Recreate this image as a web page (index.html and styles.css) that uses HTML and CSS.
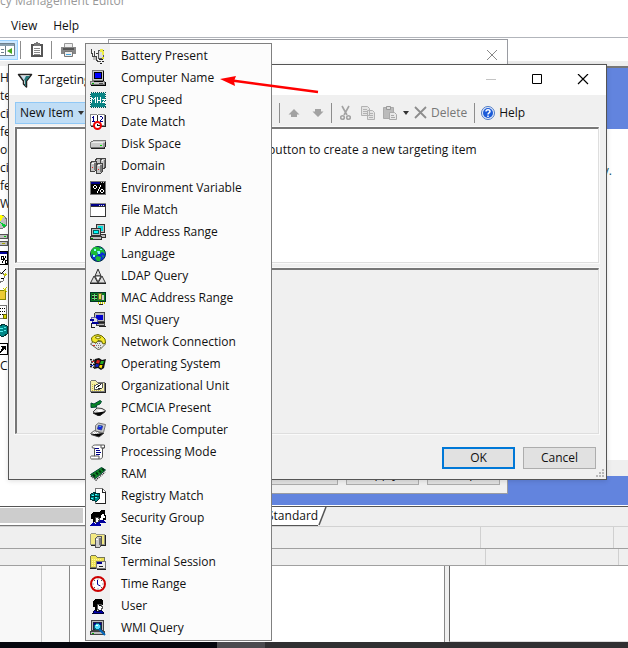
FILE: index.html
```html
<!DOCTYPE html>
<html lang="en">
<head>
<meta charset="utf-8">
<meta name="viewport" content="width=device-width, initial-scale=1">
<title>Targeting</title>
<link rel="stylesheet" href="styles.css">
</head>
<body>
<div class="desktop">
  <header class="titlebar">cy Management Editor</header>
  <nav class="menubar">
    <button type="button">View</button>
    <button type="button">Help</button>
  </nav>
  <div class="toolbar">
    <button type="button" class="tool pressed" aria-label="Show pane"><svg width="17" height="17" viewBox="0 0 17 17"><path fill="#fff" stroke="#6d7f8c" d="M-.5 2.500h15v12h-15z"/><path fill="#8aa0af" d="M0 3h14v2H0z"/><path stroke="#6d7f8c" d="M5.500 5v9M1 8.500h3M1 11.500h3"/><path fill="#45a81e" d="M12 7v6L7 10z"/></svg></button>
    <span class="divider"></span>
    <button type="button" class="tool clip" aria-label="Paste"><svg width="14" height="16" viewBox="0 0 14 16"><path fill="#fff" stroke="#555" stroke-width="2" d="M2 3h10v11H2z"/><path fill="#777" d="M4 1h2V0h2v1h2v3H4z"/><path stroke="#888" d="M4 6.500h6M4 8.500h6M4 10.500h6M4 12.500h6"/></svg></button>
    <span class="divider"></span>
    <button type="button" class="tool print" aria-label="Print"><svg width="17" height="16" viewBox="0 0 17 16"><path fill="#eee" stroke="#999" d="M4.500 1.500h8v5h-8z"/><path fill="#888" d="M1 5h15v7H1z"/><path fill="#555" d="M3 6h11v2H3z"/><path fill="#eee" stroke="#777" d="M4.500 9.500h8v5h-8z"/><path stroke="#45a6df" d="M6 12.500h5"/></svg></button>
  </div>
  <main class="workspace">
    <ul class="tree">
      <li>H</li><li>te</li><li>ci</li><li>fe</li><li>on</li><li>ci</li><li>fe</li><li>W</li>
      <li><svg class="px" viewBox="8 0 8 16"><circle cx="8" cy="8" r="7" fill="#c0c0c0" stroke="#777"/><path fill="#ff0" d="M8 8V1l4 1z"/><path fill="#0c3" d="M8 8l6 3-2 3z"/></svg></li>
      <li><svg class="px" viewBox="8 0 8 16"><path fill="#c0c0c0" stroke="#555" d="M5 2.500h10v4H5zM5 9.500h10v4H5z"/><path stroke="#0c0" d="M12 4.500h2"/><path stroke="#aa0" d="M10 11.500h3"/></svg></li>
      <li><svg class="px" viewBox="8 0 8 16"><path fill="#fff" stroke="#000" d="M5 1.500h10v13H5z"/><path fill="#009" d="M8 2h7v2H8z"/><path stroke="#000" fill="none" d="M9 6h2v3H9zM14 6l-4 7M13 10h2v3h-2z"/></svg></li>
      <li><svg class="px" viewBox="8 0 8 16"><path fill="#fff" stroke="#777" d="M7 4.500l6 2-2 7-5 1z"/><path stroke="#000" d="M9 6l5-5M9 10h3"/><path stroke="#cc0" stroke-width="2" d="M12 8l2-2"/></svg></li>
      <li><svg class="px" viewBox="8 0 8 16"><path fill="#ec3" stroke="#880" d="M5 4.500h8v9H5z"/><path stroke="#cc0" d="M12 5l3-4M11 2l4 4"/></svg></li>
      <li><svg class="px" viewBox="8 0 8 16"><path fill="#fff" stroke="#777" d="M5 1.500h9v13H5z"/><path stroke="#000" stroke-dasharray="1" d="M8 4.500h5M8 7.500h5M8 10.500h3"/><path fill="#dd0" stroke="#660" d="M11 10h3v4h-3z"/></svg></li>
      <li><svg class="px" viewBox="8 0 8 16"><path fill="#088" stroke="#033" d="M7 5l4-3 4 2v8l-4 3-4-2z"/><path stroke="#5ee" d="M8 6h3M12 5h2M8 9h3M12 8h2"/></svg></li>
      <li><svg class="px" viewBox="8 0 8 16"><path fill="#fff" stroke="#000" d="M5 3.500h10v11H5z"/><path fill="#000" d="M9 6h5v5l-2-2-3 4H8c1-3 1-4 2-5z"/></svg></li>
      <li>C</li>
    </ul>
    <section class="details"><div class="banner"></div><p class="sentence">y.</p><div class="strip"></div><div class="banner low"></div></section>
  </main>
  <div class="tabs">
    <div class="scroll"><span></span></div>
    <button type="button" class="tab">Standard</button>
    <svg class="slant" width="9" height="19" viewBox="0 0 9 19"><path fill="#fff" d="M0 0h8L1 18H0z"/><path d="M8 0L1 18" stroke="#555" stroke-width="1.500"/></svg>
  </div>
  <div class="cells one"><span></span><span></span><span></span></div>
  <div class="cells two"><span></span><span></span><span></span></div>
  <div class="panes"><div></div><div></div><div></div><div></div></div>
  <footer class="taskbar"><span></span><span></span><span></span></footer>

  <section class="properties" aria-label="Properties">
    <header><button type="button" aria-label="Close"><svg width="12" height="12" viewBox="0 0 12 12"><path d="M1 1l10 10M11 1L1 11" stroke="#888"/></svg></button></header>
    <div class="actions"><button type="button" aria-label="Cancel"></button><button type="button">Apply</button><button type="button">Help</button></div>
  </section>

  <section class="dialog" role="dialog" aria-label="Targeting">
    <header>
      <svg width="16" height="16" viewBox="0 0 16 16"><path fill="#fff" stroke="#222" stroke-width="1.500" stroke-linejoin="round" d="M1.500 2.500h13L9.500 9v6l-3-3V9z"/><path fill="#277" d="M4 4h9L9 9v5H8V9z"/><path fill="#cde" d="M4 4h5L7 8z"/></svg>
      <h1>Targeting</h1>
      <div class="winbuttons">
        <button type="button" aria-label="Minimize"><svg width="12" height="12"><path d="M1 5.500h10" stroke="#c4c4c4"/></svg></button>
        <button type="button" aria-label="Maximize"><svg width="12" height="12"><path d="M1.500 .5h9v9h-9z" fill="none" stroke="#000"/></svg></button>
        <button type="button" aria-label="Close"><svg width="12" height="12"><path d="M1 0l10 10M11 0L1 10" stroke="#000" stroke-width="1.200"/></svg></button>
      </div>
    </header>
    <div class="commands">
      <button type="button" class="new">New Item <i class="caret"></i></button>
      <div class="edit">
        <span class="divider"></span>
        <button type="button" aria-label="Move up"><svg width="12" height="16" viewBox="0 0 12 16"><path fill="#a2a2a2" d="M6 4l5.500 5.500H9V12H3V9.500H.5z"/></svg></button>
        <button type="button" class="down" aria-label="Move down"><svg width="12" height="16" viewBox="0 0 12 16"><path fill="#a2a2a2" d="M6 12l5.500-5.500H9V4H3v2.500H.5z"/></svg></button>
        <span class="divider"></span>
        <button type="button" class="cut" aria-label="Cut"><svg width="11" height="16" viewBox="0 0 11 16"><g fill="none" stroke="#a2a2a2" stroke-width="1.600"><path d="M2 1l5 9M9 1l-5 9"/><circle cx="2.500" cy="12.500" r="1.800"/><circle cx="8.500" cy="12.500" r="1.800"/></g></svg></button>
        <button type="button" class="copy" aria-label="Copy"><svg width="16" height="16" viewBox="0 0 16 16"><g fill="#e4e4e4" stroke="#b2b2b2"><path d="M1.500 1.500h6l2 2v7h-8zM7.500 5.500h5l2 2v7h-7z"/><path d="M3 4.500h4M3 6.500h4M3 8.500h4M9 8.500h4M9 10.500h4M9 12.500h4"/></g></svg></button>
        <button type="button" class="paste" aria-label="Paste"><svg width="16" height="16" viewBox="0 0 16 16"><path fill="#bbb" stroke="#aaa" d="M1.500 2.500h10v11h-10z"/><path fill="#ddd" stroke="#999" d="M4.500 1.500h4v3h-4z"/><path fill="#e8e8e8" stroke="#aaa" d="M7.500 7.500h5l2 2v5h-7z"/><path stroke="#aaa" d="M9 10.500h3M9 12.500h4"/></svg></button>
        <i class="caret"></i>
        <button type="button" class="delete"><svg width="14" height="16" viewBox="0 0 14 16"><path d="M1 2l11 11M12 2L1 13" stroke="#8d8d8d" stroke-width="1.800"/></svg>Delete</button>
        <span class="divider"></span>
        <button type="button" class="help"><svg width="14" height="14" viewBox="0 0 14 14"><circle cx="7" cy="7" r="6.500" fill="#e5eefb" stroke="#4d79c4"/><circle cx="7" cy="7" r="5" fill="#1c5bd8"/><path d="M5 5.500c0-2.500 4-2.500 4 0C9 7 7 6.700 7 8.500M7 9.500v1.500" fill="none" stroke="#fff" stroke-width="1.500"/></svg>Help</button>
      </div>
    </div>
    <div class="well items"><p>button to create a new targeting item</p></div>
    <div class="well options"></div>
    <div class="actions"><button type="button" class="ok">OK</button><button type="button">Cancel</button></div>
    <svg class="grip" width="9" height="9"><path fill="#b8b8b8" d="M6 0h2v2H6zM3 3h2v2H3zM6 3h2v2H6zM0 6h2v2H0zM3 6h2v2H3zM6 6h2v2H6z"/></svg>
  </section>

  <ul class="menu" role="menu">
    <li><button type="button" role="menuitem"><svg class="px" viewBox="0 0 16 16"><path fill="#ddd" stroke="#555" d="M8.500 2.500h5v8h-5z"/><path fill="#ee4" d="M10 1h3v2h1v4h-2V4h-2z"/><path fill="none" stroke="#444" d="M1.500 1v4h1v4M4.500 3v5M2 8.500h4v3l2 2h3M6 5.500h2"/><path fill="#bbb" d="M3 9h3v3H3z"/><path stroke="#222" d="M9 11.500h4M12 13.500h2M10 15.500h2"/><path fill="#dd2" d="M12 9h2v2h-2z"/></svg>Battery Present</button></li>
    <li><button type="button" role="menuitem"><svg class="px" viewBox="0 0 16 16"><path fill="#c6c6c6" stroke="#777" d="M2.500.5h11v10h-11zM1.500 11.500h13v3H.5v-3z"/><path fill="#00f" stroke="#000" d="M4.500 2.500h7v6h-7z"/><path stroke="#000" d="M4 11.500h9M1 15.500h15M15.500 12v3M13.500 1v10"/><path stroke="#0a0" d="M2 13.500h2"/><path stroke="#555" d="M9 13.500h4"/></svg>Computer Name</button></li>
    <li><button type="button" role="menuitem"><svg class="px" viewBox="0 0 16 16"><path fill="#088484" d="M1 1h14v14H1z"/><path fill="none" stroke="#055" stroke-dasharray="1" d="M.5.5h15v15H.5z"/><path fill="#fff" d="M1 5h1v6H1zM2 6h1v1H2zM3 7h1v1H3zM4 6h1v1H4zM5 5h1v6H5zM7 5h1v6H7zM8 8h2v1H8zM10 5h1v6h-1zM12 7h4v1h-4zM14 8h1v1h-1zM13 9h1v1h-1zM12 10h4v1h-4z"/></svg>CPU Speed</button></li>
    <li><button type="button" role="menuitem"><svg class="px" viewBox="0 0 16 16"><path fill="#fff" stroke="#888" d="M.5.5h6l1 1 1-1h6v11H.5z"/><path stroke="#222" d="M15.500 1v12M1 12.500h15M7.500 1v9"/><path fill="#008" d="M3 2h1v5H3zM2 3h1v1H2zM2 7h3v1H2zM10 2h2v1h-2zM12 3h1v2h-1zM11 5h1v1h-1zM10 6h1v1h-1zM10 7h3v1h-3z"/><circle cx="7.500" cy="11.500" r="3.500" fill="#fff" stroke="#e00" stroke-width="2" shape-rendering="auto"/><path d="M7.500 9.500v2h2" fill="none" stroke="#111"/></svg>Date Match</button></li>
    <li><button type="button" role="menuitem"><svg class="px" viewBox="0 0 16 16"><path fill="#ccc" stroke="#777" d="M.5 6.500l3-2h12v5l-2 2H.5z"/><path stroke="#eee" d="M2 6.500h11"/><path fill="none" stroke="#222" d="M1 12.500h13l1.500-2v-5"/><path fill="#999" d="M13 7h2v4h-2z"/><path stroke="#0d0" d="M10 9.500h2"/></svg>Disk Space</button></li>
    <li><button type="button" role="menuitem"><svg class="px" viewBox="0 0 16 16"><g fill="#c5c5c5" stroke="#444"><path d="M5.500 1.500l2-1h3v8h-5zM10.500 1.500l2-1h3v9l-2 1h-3z"/><path d="M.5 4.500l2-1h4v8l-2 2h-4zM6.500 6.500l2-1h4v8l-2 2h-4z"/></g><path stroke="#fff" d="M2 5.500h2M8 7.500h2M12 2.500h1"/><path fill="#777" d="M4 5h2v7H4zM10 7h2v7h-2zM14 2h1v7h-1z"/><path fill="#e22" d="M2 9h1v1H2zM8 11h1v1H8z"/></svg>Domain</button></li>
    <li><button type="button" role="menuitem"><svg class="px" viewBox="0 0 16 16"><path fill="#000" stroke="#777" d="M.5 1.500h15v13H.5z"/><path stroke="#008" stroke-width="2" d="M1 3h9"/><path stroke="#bbb" d="M11 2.500h1M13 2.500h1"/><path fill="#fff" d="M4 5h2v1H4zM3 6h1v2H3zM6 6h1v2H6zM4 8h2v1H4zM10 5h1v2h-1zM9 7h1v2H9zM8 9h1v2H8zM7 11h1v2H7zM11 9h2v1h-2zM10 10h1v2h-1zM13 10h1v2h-1zM11 12h2v1h-2z"/></svg>Environment Variable</button></li>
    <li><button type="button" role="menuitem"><svg class="px" viewBox="0 0 16 16"><path fill="#fff" stroke="#888" d="M.5 1.500h15v13H.5z"/><path stroke="#008" stroke-width="2" d="M1 3h14"/><path stroke="#ddd" d="M9 3.500h1M11 3.500h1M13 3.500h1"/><path fill="none" stroke="#333" d="M0 14.500h15.500V2M1 4.500h14"/></svg>File Match</button></li>
    <li><button type="button" role="menuitem"><svg class="px" viewBox="0 0 16 16"><path fill="#bbb" stroke="#333" d="M6.500.5h8v8h-8zM7.500 10.500h8v3h-8z"/><path fill="#0dd" d="M8 2h5v5H8z"/><path fill="#bbb" stroke="#333" d="M1.500 4.500h9v7h-9zM.5 12.500h11v3H.5z"/><path fill="#0ff" stroke="#066" d="M3.500 6.500h5v3h-5z"/><path stroke="#080" d="M1 14.500h2"/></svg>IP Address Range</button></li>
    <li><button type="button" role="menuitem"><svg class="px smooth" viewBox="0 0 16 16"><circle cx="8" cy="8" r="7.500" fill="#0a29d8" stroke="#034"/><path fill="#1bbd35" d="M1 5l3-4h5l1 3-3 2 1 3-3 1-3-2-1 3zM10 1l4 3 1 4-3-2-2 2-2-2zM7 10l4 1-1 4H7l-2-3zM12 9l2 1-1 2z"/><path fill="#8ff" d="M4 3h2v2H4zM7 5h3v3H8zM10 3h2v1h-2zM3 9h2v2H3z"/></svg>Language</button></li>
    <li><button type="button" role="menuitem"><svg class="px smooth" viewBox="0 0 16 16"><g fill="#ddd" stroke="#333"><path d="M8 1l3 7H5z"/><path d="M4 8l4 7H.5zM12 8l3.500 7H8z"/></g><path fill="#fff" stroke="#333" d="M5 8h6l-3 6z"/><path stroke="#222" d="M0 15.500h16"/></svg>LDAP Query</button></li>
    <li><button type="button" role="menuitem"><svg class="px" viewBox="0 0 16 16"><path fill="#087b20" stroke="#032" d="M.5 2.500h15v9H.5z"/><path fill="#222" d="M2 4h5v6H2z"/><path stroke="#6d7" d="M2 5.500h5M2 8.500h5M4.500 4v6"/><path fill="#dfe040" stroke="#663" d="M8.500 3.500h3v6h-3z"/><path fill="#ccc" d="M12 5h2v5h-2z"/><path stroke="#cc0" stroke-width="2" stroke-dasharray="1" d="M8 12.500h7"/><path stroke="#222" d="M9 14.500h4"/></svg>MAC Address Range</button></li>
    <li><button type="button" role="menuitem"><svg class="px" viewBox="0 0 16 16"><path fill="#bbb" stroke="#444" d="M4.500 1.500l1-1h9v9h-10zM6.500 11.500h8v2h-8z"/><path fill="#00c" d="M6 3h7v5H6z"/><path fill="#ddd" stroke="#66a" d="M1.500 5.500h4l2 2v3h-5z"/><path fill="#009" d="M0 7h4v2H0zM2 10h7v2H2z"/><path fill="none" stroke="#222" d="M1.500 11v4h3M8 10.500h7M9 14.500h7"/></svg>MSI Query</button></li>
    <li><button type="button" role="menuitem"><svg class="px smooth" viewBox="0 0 16 16"><path fill="#e4e4e4" stroke="#665" d="M.5 10L4 7l10 1 1.500 2-5 5L8 15.500z"/><path fill="#f3e82b" stroke="#660" d="M2 7.500L1.500 4 4 1.500 8 .5l4 1.500 3 3 .5 4-2.500 1-1.500-3L8 6.500 6 9z"/><path fill="#fffbc0" stroke="#770" d="M5 3.500l3-1.500 3 1.500L8 5z"/><path stroke="#777" stroke-dasharray="1" d="M5 9.500h5M6 11.500h5M8 13.500h3"/><path stroke="#d22" d="M3 11.500h2"/></svg>Network Connection</button></li>
    <li><button type="button" role="menuitem"><svg class="px smooth" viewBox="0 0 16 16"><path fill="#111" d="M5 3l4-1 3 2 4-1-2 9-3 2-3-2-4 1z"/><path fill="#d22" d="M7 4l3 .5-1 3-3-.5z"/><path fill="#2a2" d="M11 5h3l-1 3h-3z"/><path fill="#12c" d="M6 8l3 .5-1 2.500-3-.5z"/><path fill="#fd0" d="M10 9h2.500l-1 3.500L9 11z"/><path stroke="#111" stroke-width="1.300" stroke-dasharray="2 1" d="M0 3.500l5 1M1 6h4M0 8.500h5M0 10.500l4 1"/><path fill="#d22" d="M2 5h2v1H2z"/><path fill="#12c" d="M1 9h2v1H1z"/></svg>Operating System</button></li>
    <li><button type="button" role="menuitem"><svg class="px" viewBox="0 0 16 16"><path fill="#f5efaa" stroke="#777" d="M.5 13.500v-10l1-1h4l2 2h7v9z"/><path stroke="#222" fill="none" d="M1 14.500h14.500V5"/><path fill="#fff" stroke="#555" d="M4.500 11.500v-4l5-2h3v4l-3 2z"/><path stroke="#222" d="M6 10l5-4M8 10.500h3"/><path stroke="#cb4" stroke-dasharray="1" d="M2 6.500h3M2 8.500h2M2 10.500h2M2 12.500h10"/></svg>Organizational Unit</button></li>
    <li><button type="button" role="menuitem"><svg class="px smooth" viewBox="0 0 16 16"><path fill="#ddd" stroke="#444" d="M3 12l4-4 5 .5 3.500 2L10 15H8z"/><path fill="#fff" d="M7 10l4-.5 2 1-4 2.500z"/><path stroke="#222" d="M3 13l5 2.500h2l5.500-4"/><path fill="#078a23" stroke="#043" d="M1 3v4.500L7 7 5.500 5.800 10 4l1.500-2.500L10 .5 4 4z"/></svg>PCMCIA Present</button></li>
    <li><button type="button" role="menuitem"><svg class="px smooth" viewBox="0 0 16 16"><path fill="#ccc" stroke="#777" d="M5.500 3.500l3-2.500 7 1.500-2 8-8-1z"/><path fill="#12e" stroke="#349" d="M8.500 3.500l4 .5-1 4-4-1z"/><path fill="#ccc" stroke="#666" d="M.5 11.500l4-3 8 3-3 3z"/><path stroke="#fff" stroke-dasharray="1" d="M3 10.500h5M4 11.500h6"/><path stroke="#444" d="M1 12.500l8 2.500 5-4"/><path fill="#3ad" d="M9 4h2v1H9z"/></svg>Portable Computer</button></li>
    <li><button type="button" role="menuitem"><svg class="px smooth" viewBox="0 0 16 16"><path fill="#fff" stroke="#555" d="M5.500 1h9v3h-2v8c0 3-2 3-3 3h-8c-2-1-1-3 0-3h3V4h-2c-1-2 1-3 3-3z"/><path stroke="#008" d="M5 4.500h4M6 6.500h4M6 8.500h5M6 10.500h4"/><path fill="none" stroke="#555" d="M4 12h5v3M11 1v3h3"/></svg>Processing Mode</button></li>
    <li><button type="button" role="menuitem"><svg class="px smooth" viewBox="0 0 16 16"><path fill="#128d2a" stroke="#043" d="M.5 8.500l11-7 4 2.500-10 8.500z"/><path stroke="#031" stroke-width="2" d="M3 8.500l2 2M6 6.500l2 2M9 4.500l2 2M12 2.500l2 2"/><path fill="none" stroke="#222" stroke-width="1.500" stroke-dasharray="1 1" d="M1 10l5 4 9-8"/></svg>RAM</button></li>
    <li><button type="button" role="menuitem"><svg class="px" viewBox="0 0 16 16"><path fill="#fff" stroke="#777" d="M5.500.5h7l3 3v12h-10z"/><path fill="none" stroke="#222" d="M12.500 1v3h3M6 15.500h9.500V4"/><path fill="#088" stroke="#033" d="M.5 6.500l3-2 4 1h2v5l-3 3-6-2z"/><path stroke="#4ff" d="M2 7.500h2M5 6.500h2M1 10.500h2M5 9.500h2"/><path stroke="#033" d="M4.500 5v8M1 8.500h8"/></svg>Registry Match</button></li>
    <li><button type="button" role="menuitem"><svg class="px" viewBox="0 0 16 16"><path fill="#000" d="M8 3l3-3h4v4l1 2v4H9z"/><path fill="#fff" d="M12 4h2v2h1v2h-2v2h-3z"/><path fill="#009" d="M10 10h4l2 3H9z"/><path fill="#000" d="M1 5l2-3h5l2 2v3l-2-1v2H6l-1 4H3v-3H1z"/><path fill="#fff" stroke="#444" d="M5.500 7.500h3v1h1v2h-1v2h-3z"/><path fill="#00a" d="M0 15l3-3 2 2 3-2 3 3v1H0z"/></svg>Security Group</button></li>
    <li><button type="button" role="menuitem"><svg class="px" viewBox="0 0 16 16"><path fill="#f3e982" stroke="#998" d="M.5 12.500v-10l1-1h4l1 1h8v10z"/><path stroke="#222" fill="none" d="M1 13.500h14.500V3"/><path fill="#ccc" stroke="#555" d="M5.500 6.500l2-2h4v8l-2 3h-4z"/><path fill="#777" d="M9 6h2v7H9z"/><path stroke="#fff" d="M6 7.500h2"/></svg>Site</button></li>
    <li><button type="button" role="menuitem"><svg class="px" viewBox="0 0 16 16"><path fill="#eee253" stroke="#775" d="M.5 13.500v-11l1-1h4l2 2h7v10z"/><path stroke="#fff8a0" stroke-dasharray="1" d="M2 5.500h10M2 7.500h5M2 9.500h4M2 11.500h4"/><path fill="#eee" stroke="#777" d="M6.500 7.500h9v7h-9z"/><path stroke="#008" stroke-width="2" d="M7 9h5"/><path stroke="#222" d="M0 14.500h6M7 15.500h9M9 12.500h4"/></svg>Terminal Session</button></li>
    <li><button type="button" role="menuitem"><svg class="px smooth" viewBox="0 0 16 16"><circle cx="8" cy="8" r="7" fill="#fff" stroke="#c00" stroke-width="2"/><path stroke="#555" d="M8 2.500v1M8 12.500v1M2.500 8h1M12.500 8h1M4 4l1 1M12 4l-1 1M4 12l1-1M12 12l-1-1"/><path fill="none" stroke="#009" d="M7.500 4v4.500l3 1.500"/></svg>Time Range</button></li>
    <li><button type="button" role="menuitem"><svg class="px" viewBox="0 0 16 16"><path fill="#000" d="M3 4l2-3h6l2 2v5l-2-3-2 2-1 3-1 3H5V9H3z"/><path fill="#fff" stroke="#555" d="M7.500 6.500h4v2h1v2h-1v2h-3l-1-2z"/><path fill="#000" d="M9 7h2v1H9z"/><path fill="#00a" stroke="#003" d="M2.500 15.500l2-3 3 1 4-1 2 2v1z"/></svg>User</button></li>
    <li><button type="button" role="menuitem"><svg class="px" viewBox="0 0 16 16"><path fill="#bbb" stroke="#444" d="M1.500.5h12v10h-12zM.5 11.500h14v3H.5z"/><path fill="#009" stroke="#224" d="M3.500 2.500h8v7h-8z"/><circle cx="7.500" cy="6.500" r="3" fill="#5df" stroke="#067"/><path fill="#fff" d="M6 5h2v1H6z"/><path stroke="#06b" stroke-width="2" d="M9 9l6 6" shape-rendering="auto"/><path stroke="#0a0" d="M2 13.500h2"/></svg>WMI Query</button></li>
  </ul>

  <svg class="arrow" width="100" height="20" viewBox="0 0 100 20"><path d="M12 5.500L98 17" stroke="#f00" stroke-width="2.500"/><path fill="#f00" d="M0 4L16 1l-2 5 1 5z"/></svg>
</div>
</body>
</html>
```
FILE: styles.css
```css
* { box-sizing: border-box; }
body { margin: 0; font-family: "Open Sans", "Noto Sans", sans-serif; font-size: 12px; line-height: 18px; color: #111; background: #fff; }
button { font: inherit; color: inherit; background: none; border: 0; padding: 0; margin: 0; white-space: nowrap; }
svg { display: block; flex: none; }
ul { list-style: none; margin: 0; padding: 0; }
h1, p { margin: 0; font-size: inherit; font-weight: normal; }

.desktop { position: relative; display: flex; flex-direction: column; min-height: 100vh; overflow: hidden; }
.titlebar { height: 14px; line-height: 18px; margin-top: -8px; padding-bottom: 22px; color: #999; }
.menubar { display: flex; gap: 16px; padding: 0 11px; height: 22px; align-items: center; margin-top: 1px; }
.toolbar { display: flex; align-items: center; height: 24px; border-top: 1px solid #b2b5bb; }
.tool { display: flex; align-items: center; }
.pressed { width: 18px; height: 20px; background: #cce8ff; border: 1px solid #99d1ff; border-left: 0; }
.divider { width: 1px; height: 18px; background: #8d8d8d; }
.toolbar .divider { margin-left: 2px; }
.clip { margin: 0 5px 0 9px; }
.print { margin-left: 8px; }

.workspace { flex: 1; display: flex; border-top: 5px solid #eee; }
.tree { width: 100px; padding-top: 3px; overflow: hidden; }
.tree li { height: 18px; width: 9px; overflow: hidden; display: flex; align-items: center; }
.px { width: 16px; height: 16px; shape-rendering: crispEdges; }
.smooth { shape-rendering: auto; }
.tree .px { width: 8px; }
.details { flex: 1; display: flex; flex-direction: column; border-top: 2px solid #777; }
.banner { height: 61px; background: #6284de; }
.banner.low { height: 30px; border-bottom: 1px solid #fff; }
.sentence { flex: 1; padding: 33px 16px; text-align: right; color: #156; }
.strip { height: 16px; background: #efefef; }

.tabs { display: flex; height: 21px; background: #efefef; border-top: 1px solid #555; border-bottom: 1px solid #d2d2d2; }
.scroll { width: 86px; padding-top: 1px; border-bottom: 1px solid #777; background: #fff; }
.scroll span { display: block; width: 83px; height: 15px; background: #cdcdcd; }
.tab { margin-left: 181px; height: 19px; background: #fff; border-bottom: 1px solid #555; line-height: 18px; }
.cells { display: flex; height: 22px; background: #efefef; border-bottom: 1px solid #a0a0a0; }
.cells.two { height: 17px; }
.cells span { border-right: 1px solid #d0d0d0; width: 133px; }
.cells span:first-child { width: 481px; }
.cells.two span:first-child { width: 486px; }
.cells span:last-child { flex: 1; border: 0; }
.panes { display: flex; height: 76px; }
.panes div:nth-child(1) { width: 42px; background: #f8f8f8; border-right: 1px solid #c8c8c8; }
.panes div:nth-child(2) { width: 28px; background: #f8f8f8; border-right: 1px solid #888; }
.panes div:nth-child(3) { width: 375px; border-right: 1px solid #888; }
.panes div:nth-child(4) { flex: 1; margin-left: 4px; border-left: 1px solid #666; border-bottom: 1px solid #ddd; box-shadow: -4px 0 #efefef; }
.taskbar { display: flex; height: 6px; background: #303032; }
.taskbar span:nth-child(1) { width: 217px; background: #05070e; }
.taskbar span:nth-child(2) { width: 48px; background: #4b4b4f; }

.properties { position: absolute; left: 108px; top: 39px; width: 400px; height: 455px; display: flex; flex-direction: column; justify-content: space-between; background: #f0f0f0; border: 1px solid #9a9ca2; }
.properties header { height: 30px; background: #fff; display: flex; justify-content: flex-end; padding: 8px 9px; }
.actions { display: flex; justify-content: flex-end; gap: 8px; }
.actions button { width: 73px; height: 22px; background: #e1e1e1; border: 1px solid #adadad; line-height: 18px; }
.properties .actions { padding: 0 7px 8px; }

.dialog { position: absolute; left: 8px; top: 64px; width: 599px; height: 416px; display: flex; flex-direction: column; background: #f0f0f0; border: 1px solid #555; box-shadow: 0 1px 5px #0002; }
.dialog header { display: flex; align-items: center; height: 30px; padding: 0 17px 0 8px; background: #fff; gap: 5px; }
.winbuttons { display: flex; gap: 34px; margin-left: auto; }
.commands { display: flex; align-items: center; height: 22px; margin: 7px 6px 3px; }
.new { display: flex; align-items: center; gap: 4px; width: 76px; height: 22px; padding-left: 4px; background: #c0ddf5; border: 1px solid #90c8f6; }
.caret { border: 3px solid transparent; border-top: 4px solid #333; border-bottom: 0; }
.edit { display: flex; align-items: center; margin-left: 188px; }
.edit .divider { height: 20px; }
.edit button { display: flex; align-items: center; margin-left: 8px; }
.edit .down { margin: 0 7px 0 12px; }
.edit .divider + .cut { margin-left: 8px; }
.edit .copy { margin-left: 9px; }
.edit .paste { margin: 0 5px 0 6px; }
.edit .edit-caret { color: #555; }
.edit .delete { gap: 3px; color: #777; margin: 0 7px 0 5px; }
.edit .help { gap: 4px; margin-left: 6px; }
.well { margin: 0 7px 0 6px; border: 2px solid #777; border-width: 2px 1px 1px 2px; border-right-color: #dedede; border-bottom-color: #dedede; outline: 1px solid #fafafa; outline-offset: 0; }
.items { height: 136px; background: #fff; padding: 12px 0 0 251px; }
.options { flex: 1; margin-top: 5px; }
.dialog .actions { padding: 13px 10px 10px; }
.actions .ok { border: 2px solid #0078d7; line-height: 16px; }
.grip { position: absolute; right: 1px; bottom: 1px; }

.menu { position: absolute; left: 85px; top: 43px; width: 187px; padding: 1px 0; border: 1px solid #808080; background: linear-gradient(to right, #f1f1f1 24px, #fcfcfc 24px); }
.menu button { display: flex; align-items: center; gap: 15px; width: 100%; height: 22px; padding-left: 4px; }
.arrow { position: absolute; left: 220px; top: 75px; }
```
